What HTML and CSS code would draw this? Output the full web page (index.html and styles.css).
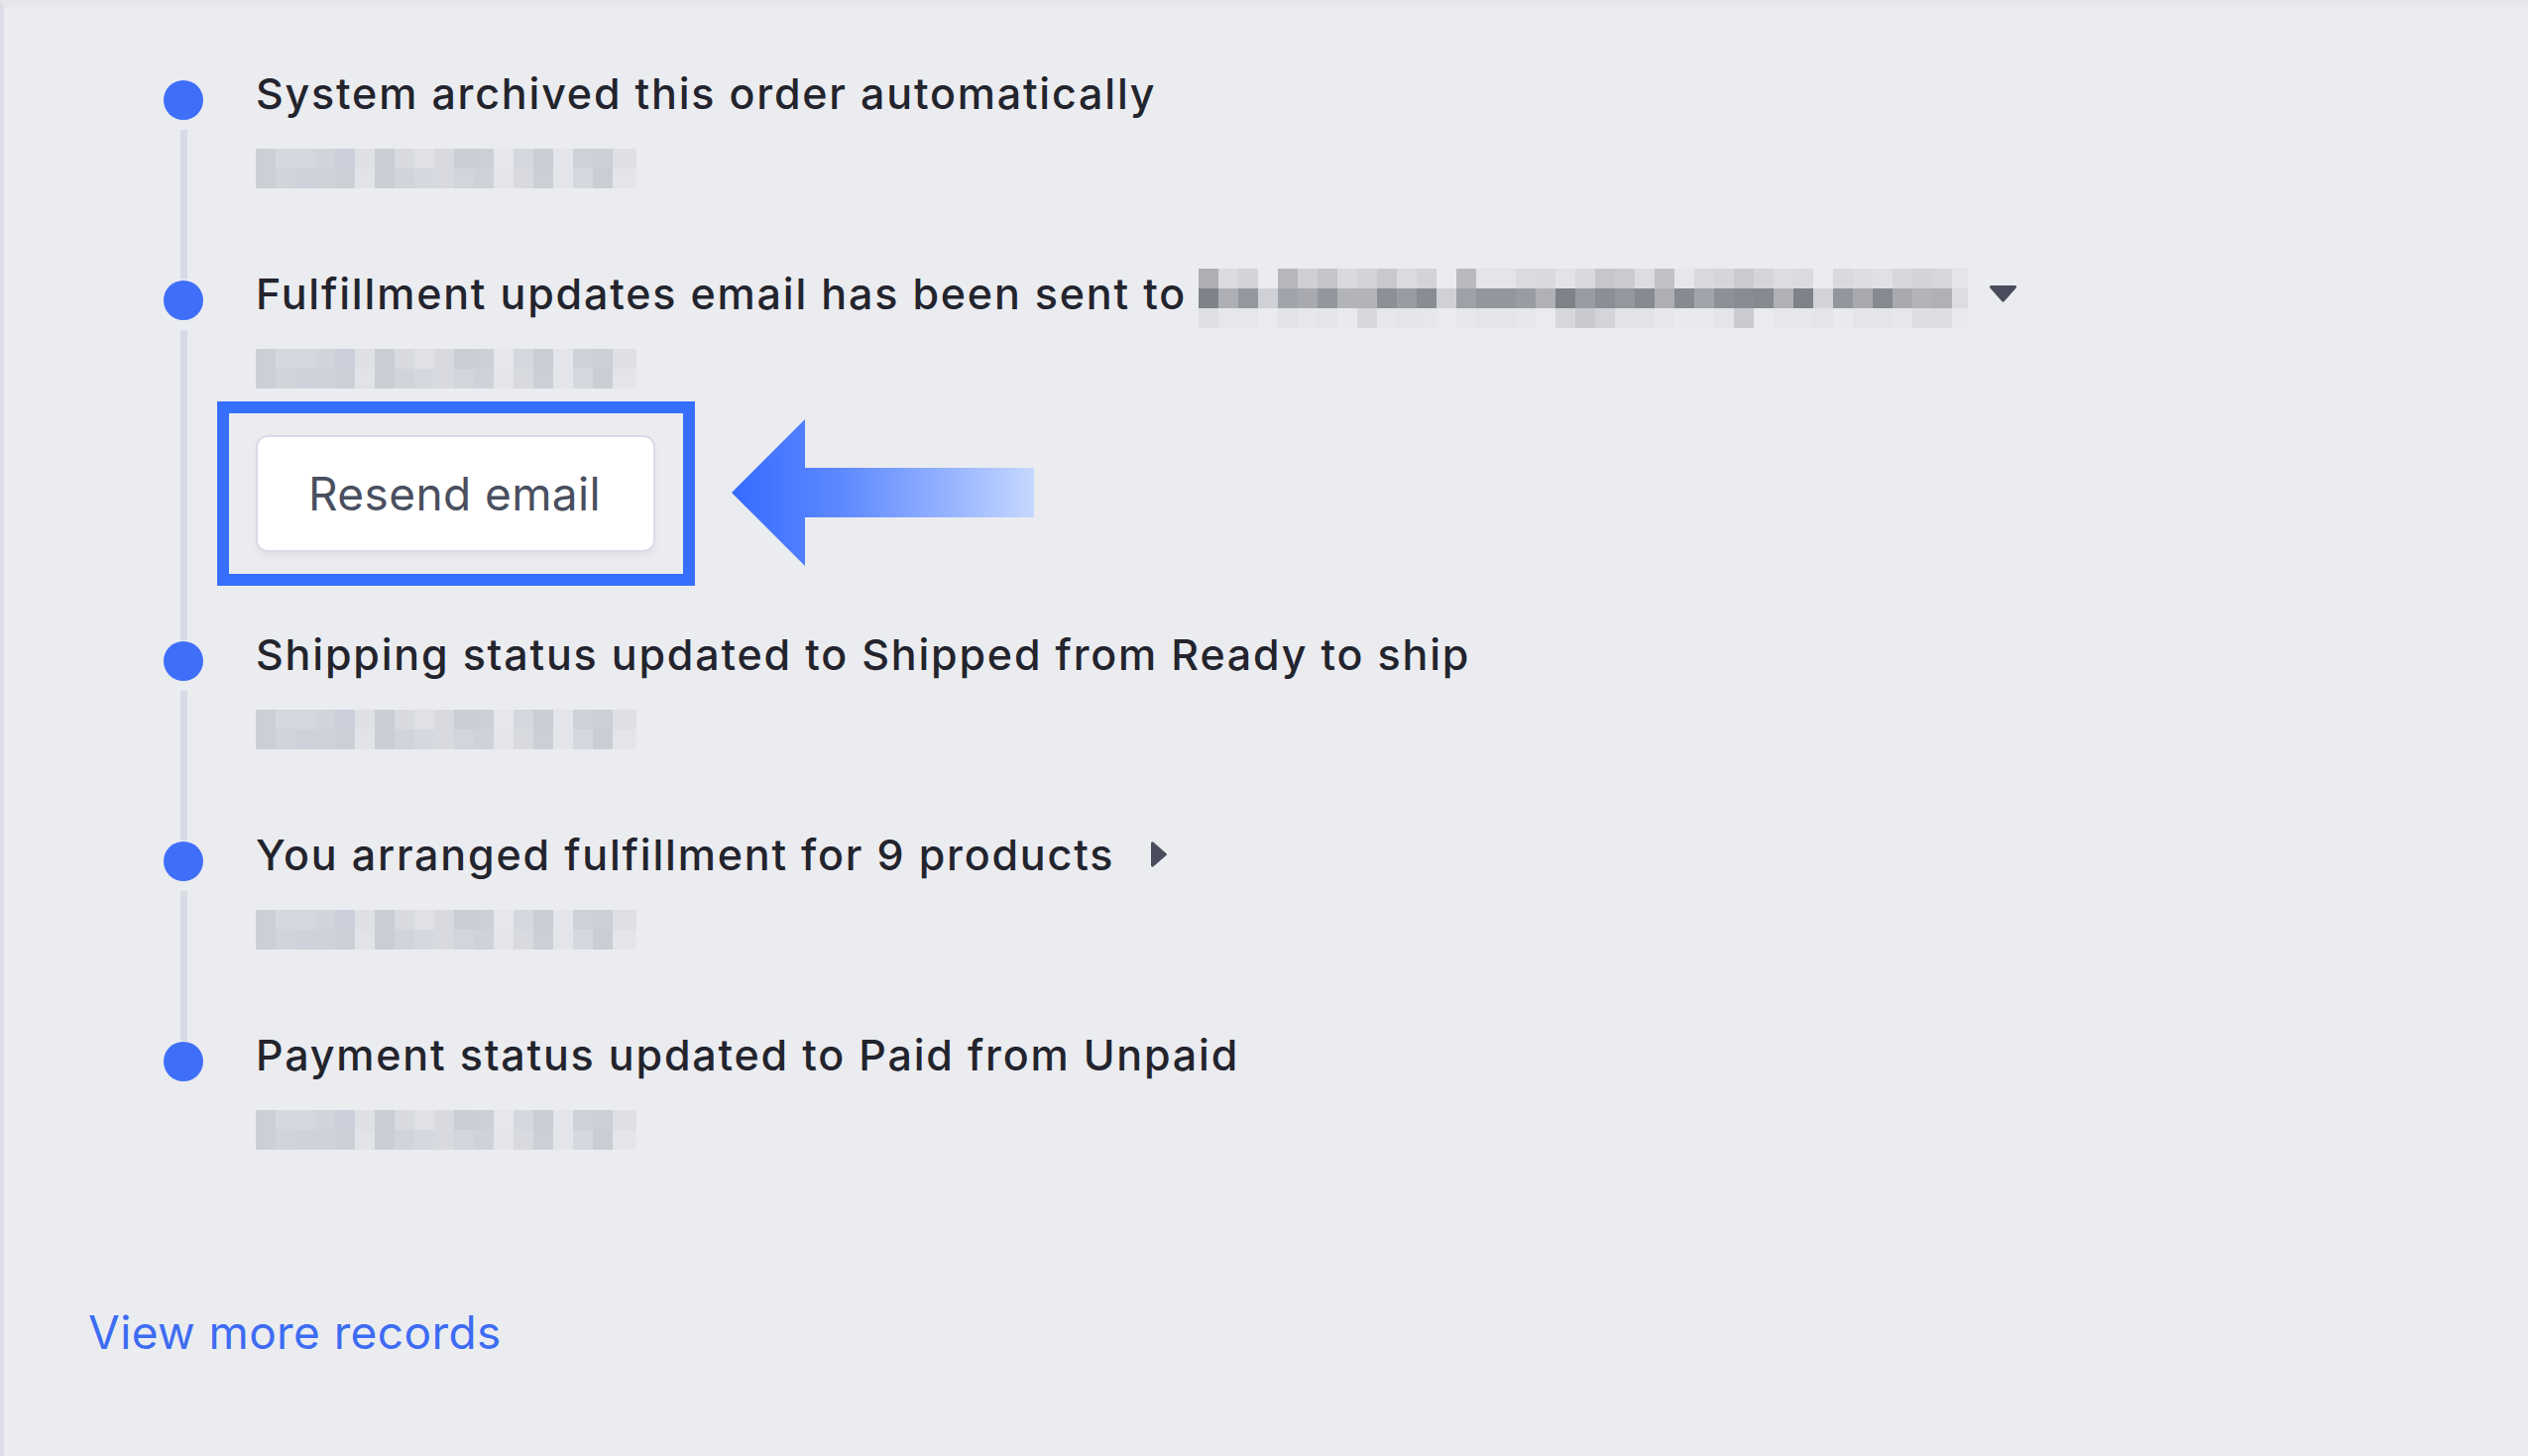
FILE: index.html
```html
<!DOCTYPE html>
<html lang="en">
<head>
<meta charset="utf-8">
<title>Order records</title>
<link rel="stylesheet" href="styles.css">
</head>
<body>
<div class="panel">
  <ul class="timeline">
    <li class="event">
      <div class="rail"><span class="dot"></span><span class="line"></span></div>
      <div class="body">
        <div class="title">System archived this order automatically</div>
        <div class="date-blur"></div>
      </div>
    </li>
    <li class="event">
      <div class="rail"><span class="dot"></span><span class="line"></span></div>
      <div class="body">
        <div class="title">
          <span>Fulfillment updates email has been sent to</span>
          <span class="email-blur"></span>
          <svg class="caret-down" width="27" height="17" viewBox="0 0 27 17"><path d="M1.5 0h24a1.5 1.5 0 0 1 1.2 2.4L14.7 16a1.5 1.5 0 0 1-2.4 0L0.3 2.4A1.5 1.5 0 0 1 1.5 0z" fill="#4a4d5c"/></svg>
        </div>
        <div class="date-blur"></div>
        <div class="resend-wrap">
          <button class="resend" type="button">Resend email</button>
          <span class="highlight"></span>
          <svg class="pointer" width="305" height="148" viewBox="0 0 305 148">
            <defs>
              <linearGradient id="arrowGrad" x1="0" y1="0" x2="305" y2="0" gradientUnits="userSpaceOnUse">
                <stop offset="0" stop-color="#356bff"/>
                <stop offset="0.35" stop-color="#5c88ff"/>
                <stop offset="0.7" stop-color="#93b1ff"/>
                <stop offset="1" stop-color="#c6d8ff"/>
              </linearGradient>
            </defs>
            <polygon points="0,74 74,0 74,49 305,49 305,99 74,99 74,148" fill="url(#arrowGrad)"/>
          </svg>
        </div>
      </div>
    </li>
    <li class="event">
      <div class="rail"><span class="dot"></span><span class="line"></span></div>
      <div class="body">
        <div class="title">Shipping status updated to Shipped from Ready to ship</div>
        <div class="date-blur"></div>
      </div>
    </li>
    <li class="event">
      <div class="rail"><span class="dot"></span><span class="line"></span></div>
      <div class="body">
        <div class="title">
          <span>You arranged fulfillment for 9 products</span>
          <svg class="caret-right" width="16" height="26" viewBox="0 0 16 26"><path d="M0 1.8v22.4a1.5 1.5 0 0 0 2.5 1.1L15.4 14.1a1.5 1.5 0 0 0 0-2.2L2.5 0.7A1.5 1.5 0 0 0 0 1.8z" fill="#4a4d5c"/></svg>
        </div>
        <div class="date-blur"></div>
      </div>
    </li>
    <li class="event event-last">
      <div class="rail"><span class="dot"></span></div>
      <div class="body">
        <div class="title">Payment status updated to Paid from Unpaid</div>
        <div class="date-blur"></div>
      </div>
    </li>
  </ul>
  <a class="more" href="#">View more records</a>
</div>
</body>
</html>
```

FILE: styles.css
```css
* { box-sizing: border-box; }

html, body {
  margin: 0;
  padding: 0;
  background: #ebecf0;
}

body {
  font-family: Inter, "Noto Sans", "Liberation Sans", sans-serif;
  color: #23242d;
}

.panel {
  min-height: 1469px;
  border-left: 4px solid #dcdde7;
  border-top: 7px solid #e6e7eb;
  padding: 61px 0 0 85px;
}

.timeline {
  list-style: none;
  margin: 0;
  padding: 0 0 0 76px;
}

.event {
  display: grid;
  grid-template-columns: 40px 1fr;
  column-gap: 53px;
  padding-bottom: 80px;
}

.rail {
  display: flex;
  flex-direction: column;
  align-items: center;
}

.dot {
  width: 40px;
  height: 40px;
  border-radius: 50%;
  background: #3f6ff8;
  margin-top: 13px;
  flex: none;
}

.line {
  width: 7px;
  flex: 1;
  background: #d8dae6;
  margin-top: 10px;
  margin-bottom: -92px;
}

.body {
  min-width: 0;
}

.title {
  display: flex;
  align-items: center;
  height: 52px;
  font-size: 43px;
  font-weight: 500;
  line-height: 52px;
  letter-spacing: 1.8px;
  white-space: nowrap;
}

.date-blur {
  margin-top: 30px;
  width: 384px;
  height: 40px;
  background-image:
    linear-gradient(90deg, #cdcfd7 0 20px, #d5d7de 20px 40px, #d5d7de 40px 60px, #d2d4db 60px 80px, #cccedb 80px 100px, #dfe0e6 100px 120px, #cbcdd5 120px 140px, #d8dae0 140px 160px, #e0e1e7 160px 180px, #d8dae0 180px 200px, #cbcdd5 200px 220px, #cdcfd7 220px 240px, #e6e7eb 240px 260px, #d5d7de 260px 280px, #cbcdd5 280px 300px, #e4e5ea 300px 320px, #cfd1d9 320px 340px, #cdcfd7 340px 360px, #dfe0e6 360px 384px),
    linear-gradient(90deg, #cdcfd7 0 20px, #d2d4db 20px 40px, #cfd2da 40px 60px, #d0d2da 60px 80px, #cdcfd7 80px 100px, #e2e3e8 100px 120px, #cbcdd5 120px 140px, #d2d4db 140px 160px, #d6d8df 160px 180px, #d8dae0 180px 200px, #d3d5dc 200px 220px, #d0d2da 220px 240px, #e4e5ea 240px 260px, #d8dae0 260px 280px, #cdcfd7 280px 300px, #e4e5ea 300px 320px, #d6d8df 320px 340px, #cbcdd5 340px 360px, #e4e5ea 360px 384px);
  background-size: 384px 20px, 384px 20px;
  background-position: 0 0, 0 20px;
  background-repeat: no-repeat;
}

.email-blur {
  flex: none;
  width: 776px;
  height: 60px;
  margin: 10px 0 0 12px;
  background-image:
    linear-gradient(90deg, #aeafb4 0 20px, #dadbe0 20px 40px, #d3d4d9 40px 60px, #ebecf0 60px 80px, #b6b7bc 80px 100px, #cfd0d5 100px 120px, #c4c5ca 120px 140px, #d9dadf 140px 160px, #d3d4d9 160px 180px, #c8c9ce 180px 200px, #dadbe0 200px 220px, #d3d4d9 220px 240px, #ebecf0 240px 260px, #b9babf 260px 280px, #e4e5e9 280px 300px, #e4e5e9 300px 320px, #dadbe0 320px 340px, #d9dadf 340px 360px, #e2e3e7 360px 380px, #d9dadf 380px 400px, #c6c7cc 400px 420px, #cacbd0 420px 440px, #dcdde1 440px 460px, #c1c2c7 460px 480px, #e6e7eb 480px 500px, #d8d9de 500px 520px, #d5d6db 520px 540px, #cacbd0 540px 560px, #d4d5da 560px 580px, #dcdde1 580px 600px, #dadbe0 600px 620px, #ebecf0 620px 640px, #d9dadf 640px 660px, #dddee2 660px 680px, #e0e1e5 680px 700px, #d6d7dc 700px 720px, #d3d4d9 720px 740px, #d6d7dc 740px 760px, #e4e5e9 760px 776px),
    linear-gradient(90deg, #808289 0 20px, #aeafb4 20px 40px, #95979e 40px 60px, #d0d1d6 60px 80px, #a2a4ab 80px 100px, #a8aab0 100px 120px, #94969d 120px 140px, #b3b4b9 140px 160px, #b3b4b9 160px 180px, #8e9097 180px 200px, #9a9ca3 200px 220px, #8a8c93 220px 240px, #d0d1d6 240px 260px, #9fa1a8 260px 280px, #94969d 280px 300px, #94969d 300px 320px, #9a9ca3 320px 340px, #b0b1b6 340px 360px, #7f8188 360px 380px, #9a9ca3 380px 400px, #8c8e95 400px 420px, #95979e 420px 440px, #888a91 440px 460px, #aeafb4 460px 480px, #888a91 480px 500px, #a2a4ab 500px 520px, #8e9097 520px 540px, #8a8c93 540px 560px, #878990 560px 580px, #b0b1b6 580px 600px, #7f8188 600px 620px, #d2d3d8 620px 640px, #94969d 640px 660px, #a8aab0 660px 680px, #878990 680px 700px, #a8aab0 700px 720px, #b3b4b9 720px 740px, #b0b1b6 740px 760px, #dcdde1 760px 776px),
    linear-gradient(90deg, #dfe0e4 0 20px, #e6e7eb 20px 40px, #e6e7eb 40px 60px, #eaebef 60px 80px, #e2e3e7 80px 100px, #e6e7eb 100px 120px, #e4e5e9 120px 140px, #e9eaee 140px 160px, #d7d8dc 160px 180px, #e6e7eb 180px 200px, #e4e5e9 200px 220px, #e6e7eb 220px 240px, #eaebef 240px 260px, #e6e7eb 260px 280px, #e4e5e9 280px 300px, #e4e5e9 300px 320px, #e6e7eb 320px 340px, #eaebef 340px 360px, #d7d8dc 360px 380px, #c9cacf 380px 400px, #d4d5da 400px 420px, #e2e3e7 420px 440px, #e2e3e7 440px 460px, #e6e7eb 460px 480px, #e9eaee 480px 500px, #e9eaee 500px 520px, #e4e5e9 520px 540px, #cacbd0 540px 560px, #eaebef 560px 580px, #e6e7eb 580px 600px, #e6e7eb 600px 620px, #e4e5e9 620px 640px, #e9eaee 640px 660px, #e4e5e9 660px 680px, #e4e5e9 680px 700px, #e6e7eb 700px 720px, #dddee2 720px 740px, #dddee2 740px 760px, #e8e9ed 760px 776px);
  background-size: 776px 20px, 776px 20px, 776px 20px;
  background-position: 0 0, 0 20px, 0 40px;
  background-repeat: no-repeat;
}

.caret-down {
  flex: none;
  margin-left: 22px;
}

.caret-right {
  flex: none;
  margin-left: 37px;
}

.resend-wrap {
  position: relative;
  width: max-content;
  margin-top: 47px;
  margin-bottom: -3px;
}

.resend {
  display: block;
  height: 118px;
  padding: 0 53px 0 51px;
  background: #ffffff;
  border: 2px solid #dadbe7;
  border-radius: 12px;
  box-shadow: 0 4px 6px rgba(40, 44, 80, 0.05);
  font-family: Inter, "Noto Sans", "Liberation Sans", sans-serif;
  font-size: 46px;
  letter-spacing: 0.4px;
  color: #4a4f5f;
  cursor: pointer;
}

.highlight {
  position: absolute;
  top: -34px;
  left: -39px;
  right: -40px;
  bottom: -34px;
  border: 12px solid #366efe;
  pointer-events: none;
}

.pointer {
  position: absolute;
  left: 480px;
  top: -16px;
}

.more {
  display: inline-block;
  margin-top: 76px;
  font-size: 46px;
  line-height: 56px;
  letter-spacing: 0.4px;
  color: #3d6cf2;
  text-decoration: none;
}
```
